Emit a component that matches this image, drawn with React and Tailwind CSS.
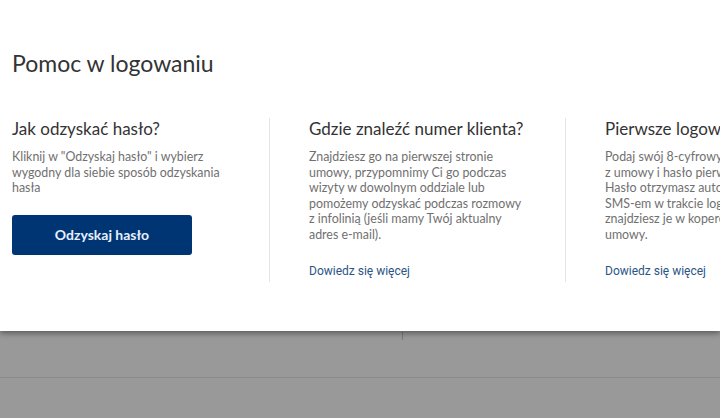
import React from 'react';

const columns = [
  {
    title: 'Jak odzyskać hasło?',
    lines: ['Kliknij w "Odzyskaj hasło" i wybierz', 'wygodny dla siebie sposób odzyskania', 'hasła'],
    button: 'Odzyskaj hasło',
  },
  {
    title: 'Gdzie znaleźć numer klienta?',
    lines: [
      'Znajdziesz go na pierwszej stronie',
      'umowy, przypomnimy Ci go podczas',
      'wizyty w dowolnym oddziale lub',
      'pomożemy odzyskać podczas rozmowy',
      'z infolinią (jeśli mamy Twój aktualny',
      'adres e-mail).',
    ],
    link: 'Dowiedz się więcej',
  },
  {
    title: 'Pierwsze logowanie',
    lines: [
      'Podaj swój 8-cyfrowy numer klienta',
      'z umowy i hasło pierwszego logowania.',
      'Hasło otrzymasz automatycznie',
      'SMS-em w trakcie logowania lub',
      'znajdziesz je w kopercie dołączonej do',
      'umowy.',
    ],
    link: 'Dowiedz się więcej',
  },
];

const App = () => {
  return (
    <div className="h-[418px] w-[720px] overflow-hidden bg-[#999999] flex flex-col" style={{ fontFamily: 'Lato, "Open Sans", sans-serif' }}>
      {/* Modal panel */}
      <div className="h-[331px] shrink-0 bg-white shadow-[0_2px_6px_rgba(0,0,0,0.45)] relative z-10 pl-3 pt-[48px] overflow-hidden">
        <h1 className="text-[23px] leading-[30px] text-[#333333]">Pomoc w logowaniu</h1>

        <div className="flex mt-[40px] w-[900px]">
          {columns.map((col, i) => (
            <div
              key={i}
              className={
                i === 0
                  ? 'w-[257px] shrink-0 pr-6 h-[164px]'
                  : 'w-[296px] shrink-0 border-l border-[#e3e3e3] pl-[39px] pr-6 h-[164px]'
              }
            >
              <h2 className="text-[17px] leading-[22px] text-[#333333] whitespace-nowrap">{col.title}</h2>
              <p className="mt-[9px] text-[12.4px] leading-[15.6px] text-[#707070] whitespace-nowrap">
                {col.lines.map((line, j) => (
                  <span key={j} className="block">{line}</span>
                ))}
              </p>
              {col.button && (
                <button className="mt-[19px] w-[180px] h-[40px] rounded-[3px] bg-[#003574] text-[#e6f0ff] text-[14px] font-bold">
                  {col.button}
                </button>
              )}
              {col.link && (
                <a
                  href="#"
                  className="block mt-[20px] text-[12px] leading-[16px] text-[#2a5585]"
                  style={{ fontFamily: 'Roboto, sans-serif' }}
                >
                  {col.link}
                </a>
              )}
            </div>
          ))}
        </div>
      </div>

      {/* Page behind the overlay */}
      <div className="flex-1 relative">
        <div className="h-[47px] border-b border-[#8a8a8a]"></div>
        <span className="absolute left-[402px] top-[1px] h-[8px] w-px bg-[#7a7a7a]"></span>
      </div>
    </div>
  );
};

export default App;
